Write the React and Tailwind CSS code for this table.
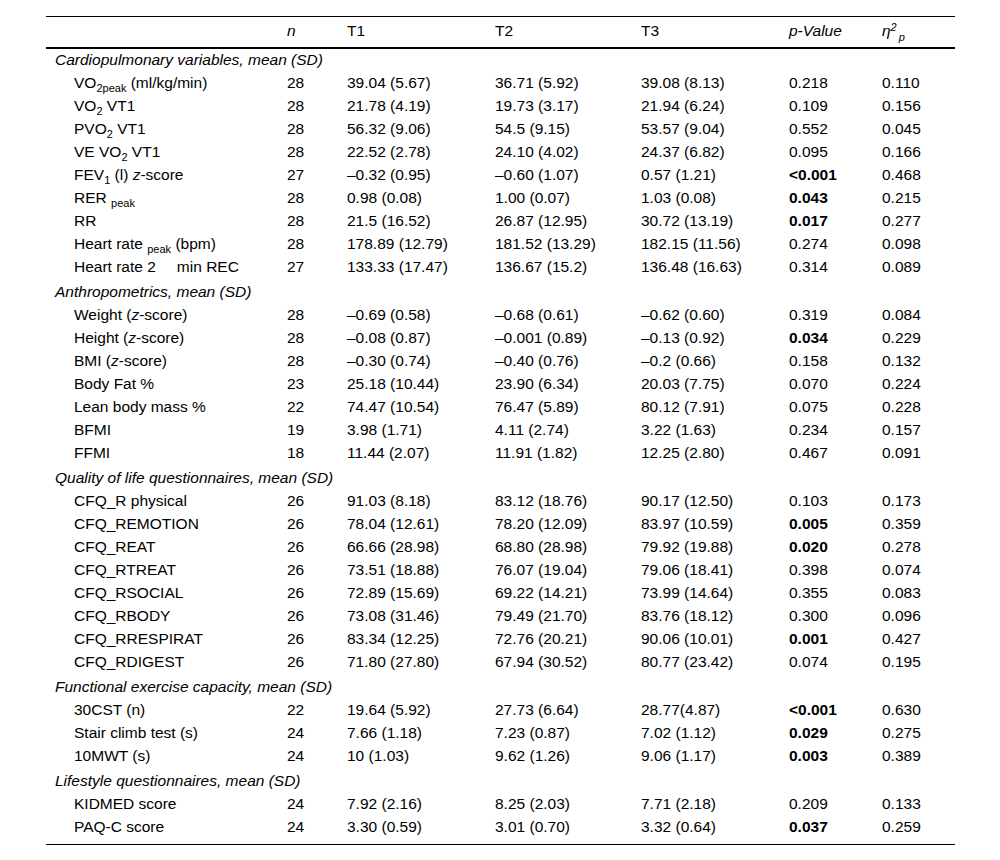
import React from "react";

const Sub = ({ children }) => (
  <span className="relative top-[4px] text-[11px] leading-none">{children}</span>
);

const Z = () => <span className="italic">z</span>;

const sections = [
  {
    title: "Cardiopulmonary variables, mean (SD)",
    first: true,
    rows: [
      [<>VO<Sub>2peak</Sub> (ml/kg/min)</>, "28", "39.04 (5.67)", "36.71 (5.92)", "39.08 (8.13)", "0.218", "0.110"],
      [<>VO<Sub>2</Sub> VT1</>, "28", "21.78 (4.19)", "19.73 (3.17)", "21.94 (6.24)", "0.109", "0.156"],
      [<>PVO<Sub>2</Sub> VT1</>, "28", "56.32 (9.06)", "54.5 (9.15)", "53.57 (9.04)", "0.552", "0.045"],
      [<>VE VO<Sub>2</Sub> VT1</>, "28", "22.52 (2.78)", "24.10 (4.02)", "24.37 (6.82)", "0.095", "0.166"],
      [<>FEV<Sub>1</Sub> (l) <Z />-score</>, "27", "–0.32 (0.95)", "–0.60 (1.07)", "0.57 (1.21)", "<0.001", "0.468", true],
      [<>RER <Sub>peak</Sub></>, "28", "0.98 (0.08)", "1.00 (0.07)", "1.03 (0.08)", "0.043", "0.215", true],
      ["RR", "28", "21.5 (16.52)", "26.87 (12.95)", "30.72 (13.19)", "0.017", "0.277", true],
      [<>Heart rate <Sub>peak</Sub> (bpm)</>, "28", "178.89 (12.79)", "181.52 (13.29)", "182.15 (11.56)", "0.274", "0.098"],
      [<>Heart rate 2<span className="inline-block w-[21px]" />min REC</>, "27", "133.33 (17.47)", "136.67 (15.2)", "136.48 (16.63)", "0.314", "0.089"],
    ],
  },
  {
    title: "Anthropometrics, mean (SD)",
    rows: [
      [<>Weight (<Z />-score)</>, "28", "–0.69 (0.58)", "–0.68 (0.61)", "–0.62 (0.60)", "0.319", "0.084"],
      [<>Height (<Z />-score)</>, "28", "–0.08 (0.87)", "–0.001 (0.89)", "–0.13 (0.92)", "0.034", "0.229", true],
      [<>BMI (<Z />-score)</>, "28", "–0.30 (0.74)", "–0.40 (0.76)", "–0.2 (0.66)", "0.158", "0.132"],
      ["Body Fat %", "23", "25.18 (10.44)", "23.90 (6.34)", "20.03 (7.75)", "0.070", "0.224"],
      ["Lean body mass %", "22", "74.47 (10.54)", "76.47 (5.89)", "80.12 (7.91)", "0.075", "0.228"],
      ["BFMI", "19", "3.98 (1.71)", "4.11 (2.74)", "3.22 (1.63)", "0.234", "0.157"],
      ["FFMI", "18", "11.44 (2.07)", "11.91 (1.82)", "12.25 (2.80)", "0.467", "0.091"],
    ],
  },
  {
    title: "Quality of life questionnaires, mean (SD)",
    rows: [
      ["CFQ_R physical", "26", "91.03 (8.18)", "83.12 (18.76)", "90.17 (12.50)", "0.103", "0.173"],
      ["CFQ_REMOTION", "26", "78.04 (12.61)", "78.20 (12.09)", "83.97 (10.59)", "0.005", "0.359", true],
      ["CFQ_REAT", "26", "66.66 (28.98)", "68.80 (28.98)", "79.92 (19.88)", "0.020", "0.278", true],
      ["CFQ_RTREAT", "26", "73.51 (18.88)", "76.07 (19.04)", "79.06 (18.41)", "0.398", "0.074"],
      ["CFQ_RSOCIAL", "26", "72.89 (15.69)", "69.22 (14.21)", "73.99 (14.64)", "0.355", "0.083"],
      ["CFQ_RBODY", "26", "73.08 (31.46)", "79.49 (21.70)", "83.76 (18.12)", "0.300", "0.096"],
      ["CFQ_RRESPIRAT", "26", "83.34 (12.25)", "72.76 (20.21)", "90.06 (10.01)", "0.001", "0.427", true],
      ["CFQ_RDIGEST", "26", "71.80 (27.80)", "67.94 (30.52)", "80.77 (23.42)", "0.074", "0.195"],
    ],
  },
  {
    title: "Functional exercise capacity, mean (SD)",
    rows: [
      ["30CST (n)", "22", "19.64 (5.92)", "27.73 (6.64)", "28.77(4.87)", "<0.001", "0.630", true],
      ["Stair climb test (s)", "24", "7.66 (1.18)", "7.23 (0.87)", "7.02 (1.12)", "0.029", "0.275", true],
      ["10MWT (s)", "24", "10 (1.03)", "9.62 (1.26)", "9.06 (1.17)", "0.003", "0.389", true],
    ],
  },
  {
    title: "Lifestyle questionnaires, mean (SD)",
    rows: [
      ["KIDMED score", "24", "7.92 (2.16)", "8.25 (2.03)", "7.71 (2.18)", "0.209", "0.133"],
      ["PAQ-C score", "24", "3.30 (0.59)", "3.01 (0.70)", "3.32 (0.64)", "0.037", "0.259", true],
    ],
  },
];

const grid = "grid grid-cols-[232px_60px_148px_146px_148px_93px_73px] pl-[9px]";

export default function App() {
  return (
    <div className="w-[1000px] h-[860px] bg-white text-black text-[15.5px] font-[family-name:'Liberation_Sans',Arial,sans-serif]">
      <div className="ml-[46px] w-[909px] pt-[16px]">
        <div className="border-t border-black">
          <div className={`${grid} pt-[2px] h-[32px] leading-[23px] border-b-2 border-black`}>
            <div />
            <div className="italic">n</div>
            <div>T1</div>
            <div>T2</div>
            <div>T3</div>
            <div className="italic">p-Value</div>
            <div className="italic whitespace-nowrap">
              η<span className="relative -top-[5px] text-[11px] leading-none">2</span>
              <span className="relative top-[5px] text-[11px] leading-none ml-[2px]">p</span>
            </div>
          </div>
          <div className="-mt-[1px] pb-[6px] border-b border-black">
            {sections.map((s) => (
              <div key={s.title}>
                <div className={`pl-[9px] italic leading-[23px] ${s.first ? "" : "pt-[2px]"}`}>{s.title}</div>
                {s.rows.map((r, i) => (
                  <div key={i} className={`${grid} leading-[23px] h-[23px]`}>
                    <div className="pl-[19px] whitespace-nowrap">{r[0]}</div>
                    <div>{r[1]}</div>
                    <div>{r[2]}</div>
                    <div>{r[3]}</div>
                    <div>{r[4]}</div>
                    <div className={r[7] ? "font-bold" : ""}>{r[5]}</div>
                    <div>{r[6]}</div>
                  </div>
                ))}
              </div>
            ))}
          </div>
        </div>
      </div>
    </div>
  );
}
